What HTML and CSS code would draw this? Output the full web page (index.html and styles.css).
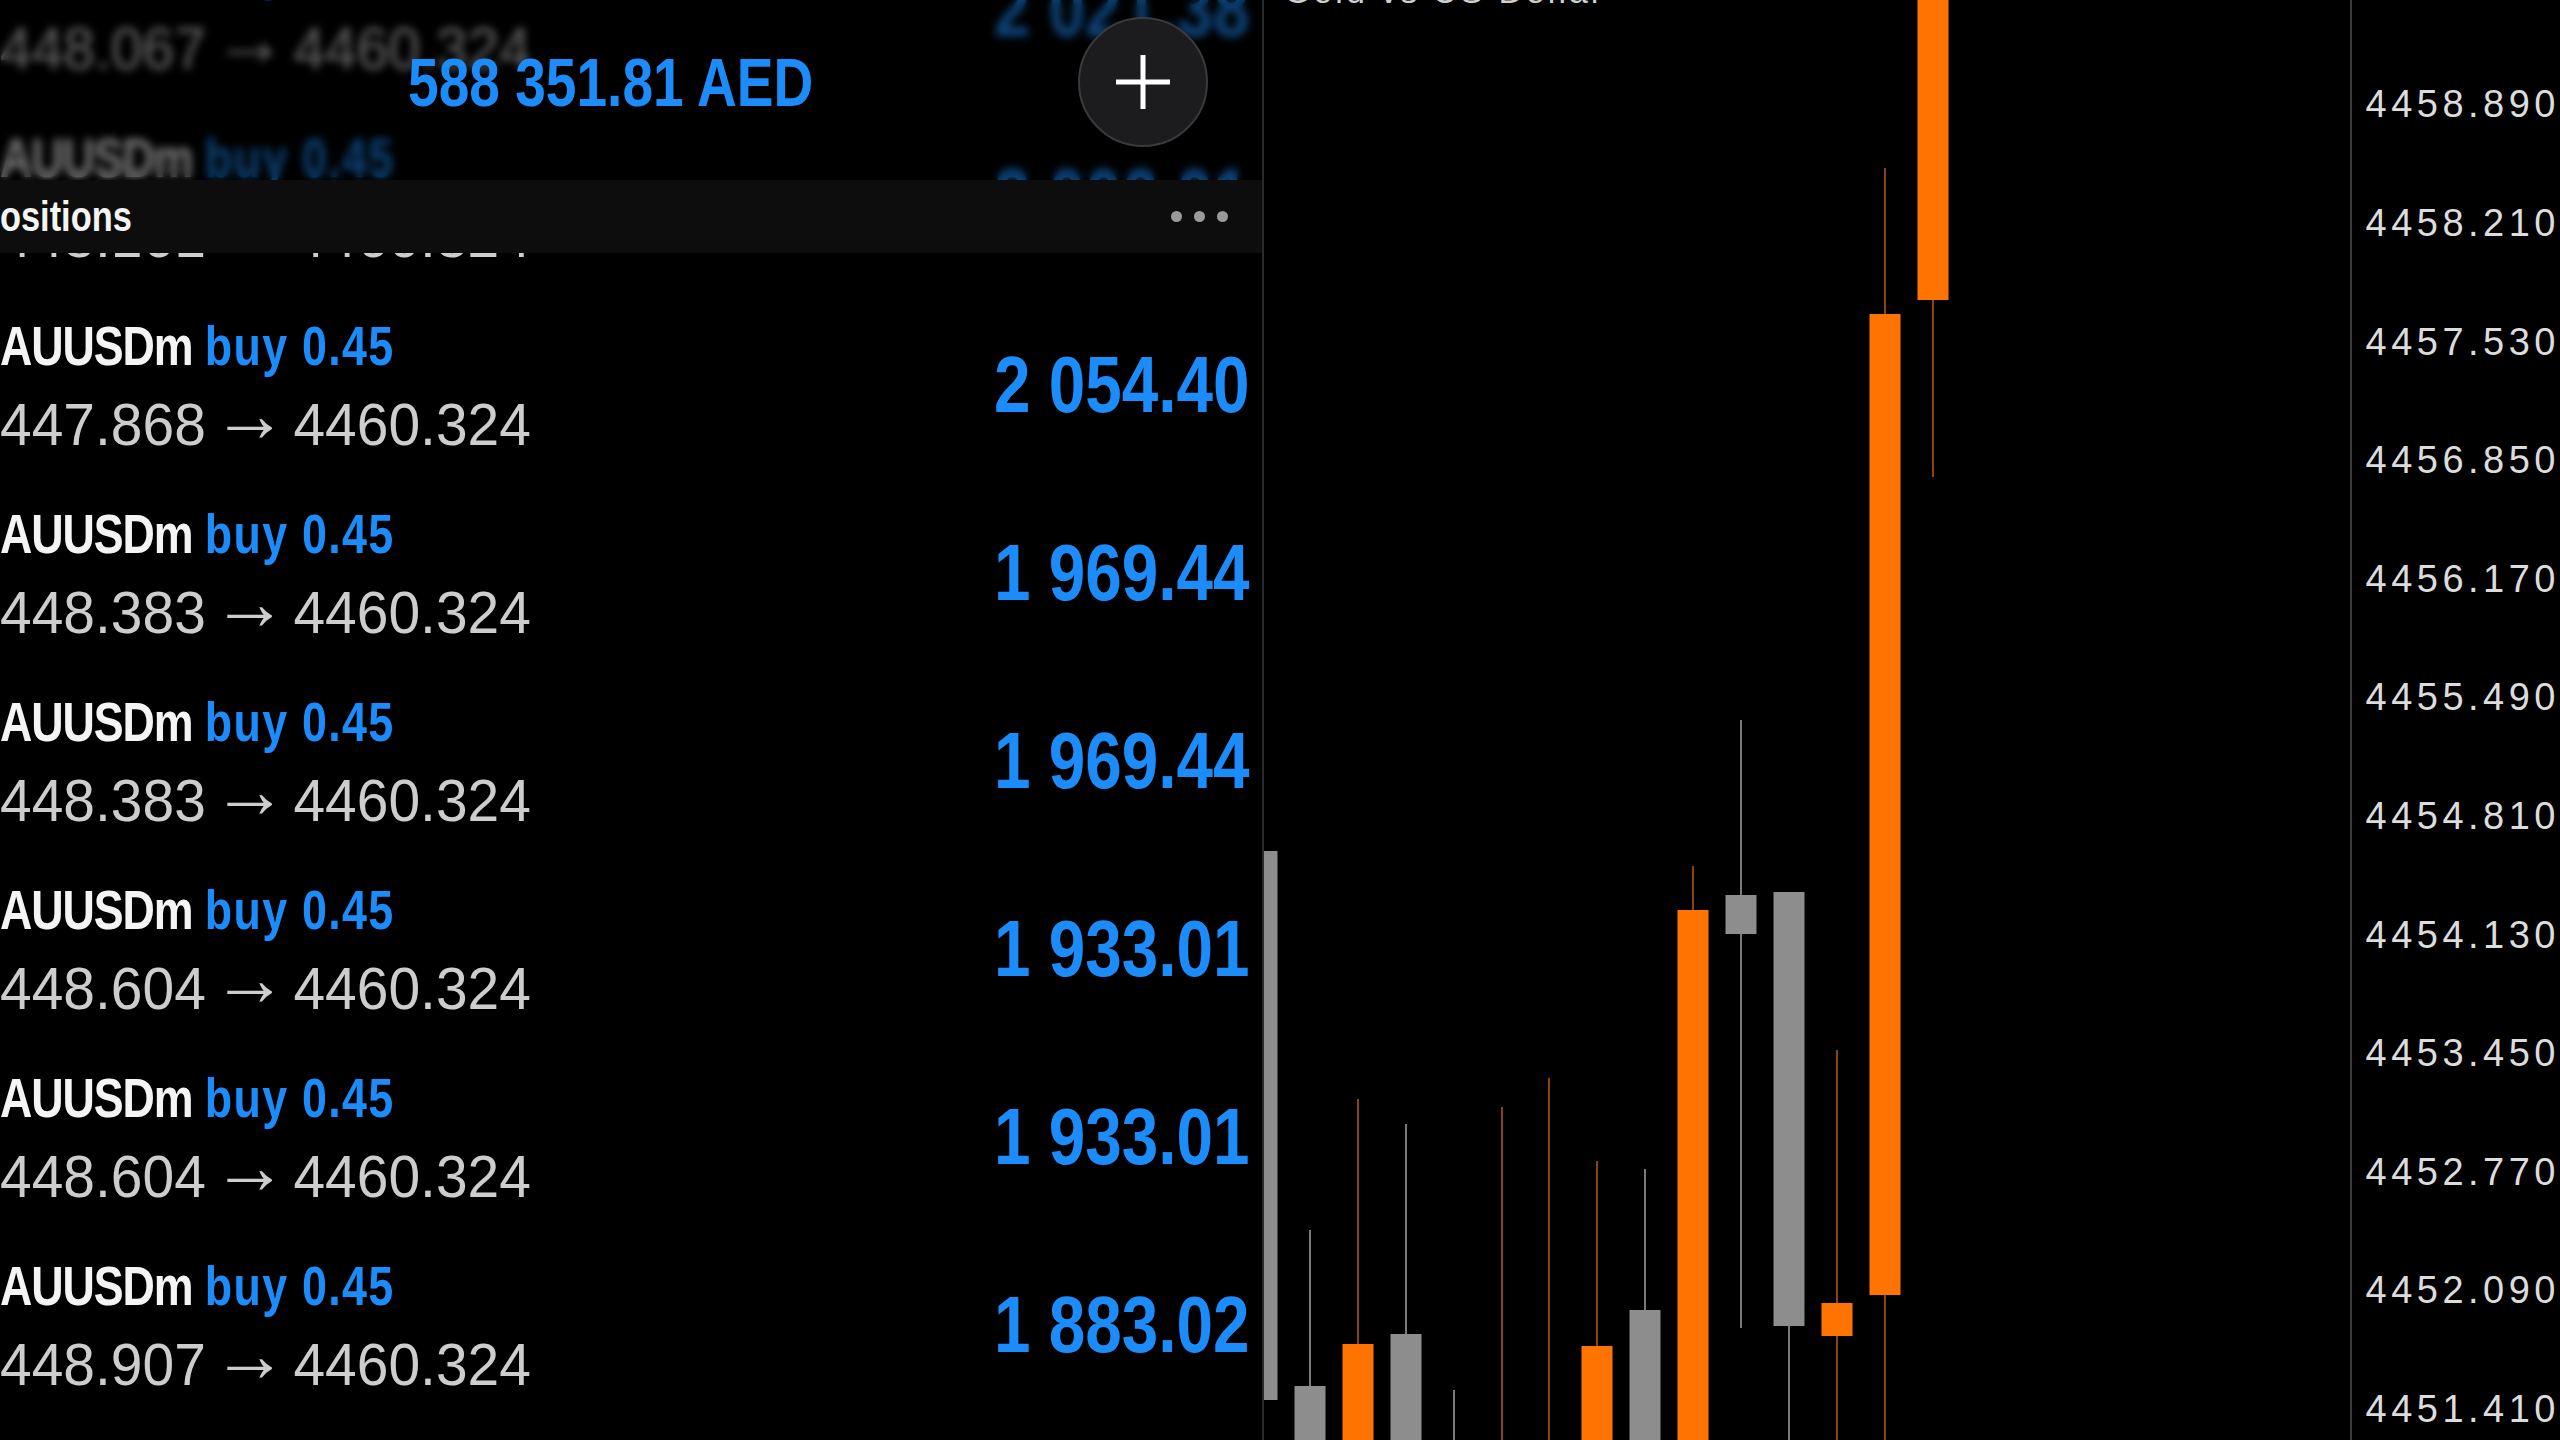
FILE: index.html
```html
<!DOCTYPE html>
<html lang="en">

<head>
    <meta charset="UTF-8">
    <meta name="viewport" content="width=device-width, initial-scale=1.0">
    <title>Positions</title>
    <link rel="stylesheet" href="styles.css">
</head>

<body>
    <div class="screen">
        <!-- Список позиций -->
        <section class="positions-panel">
            <div class="rows">
                <div class="row">
                    <div class="row-info">
                        <div class="symbol"><span class="ticker">AUUSDm</span> <span class="side">buy 0.45</span></div>
                        <div class="prices">448.067 <span class="arrow">→</span> 4460.324</div>
                    </div>
                    <div class="profit">2 021.38</div>
                </div>
                <div class="row">
                    <div class="row-info">
                        <div class="symbol"><span class="ticker">AUUSDm</span> <span class="side">buy 0.45</span></div>
                        <div class="prices">448.161 <span class="arrow">→</span> 4460.324</div>
                    </div>
                    <div class="profit">2 006.01</div>
                </div>
                <div class="row">
                    <div class="row-info">
                        <div class="symbol"><span class="ticker">AUUSDm</span> <span class="side">buy 0.45</span></div>
                        <div class="prices">447.868 <span class="arrow">→</span> 4460.324</div>
                    </div>
                    <div class="profit">2 054.40</div>
                </div>
                <div class="row">
                    <div class="row-info">
                        <div class="symbol"><span class="ticker">AUUSDm</span> <span class="side">buy 0.45</span></div>
                        <div class="prices">448.383 <span class="arrow">→</span> 4460.324</div>
                    </div>
                    <div class="profit">1 969.44</div>
                </div>
                <div class="row">
                    <div class="row-info">
                        <div class="symbol"><span class="ticker">AUUSDm</span> <span class="side">buy 0.45</span></div>
                        <div class="prices">448.383 <span class="arrow">→</span> 4460.324</div>
                    </div>
                    <div class="profit">1 969.44</div>
                </div>
                <div class="row">
                    <div class="row-info">
                        <div class="symbol"><span class="ticker">AUUSDm</span> <span class="side">buy 0.45</span></div>
                        <div class="prices">448.604 <span class="arrow">→</span> 4460.324</div>
                    </div>
                    <div class="profit">1 933.01</div>
                </div>
                <div class="row">
                    <div class="row-info">
                        <div class="symbol"><span class="ticker">AUUSDm</span> <span class="side">buy 0.45</span></div>
                        <div class="prices">448.604 <span class="arrow">→</span> 4460.324</div>
                    </div>
                    <div class="profit">1 933.01</div>
                </div>
                <div class="row">
                    <div class="row-info">
                        <div class="symbol"><span class="ticker">AUUSDm</span> <span class="side">buy 0.45</span></div>
                        <div class="prices">448.907 <span class="arrow">→</span> 4460.324</div>
                    </div>
                    <div class="profit">1 883.02</div>
                </div>
            </div>

            <!-- Шапка поверх списка -->
            <div class="panel-top">
                <div class="account-bar">
                    <div class="balance">588 351.81 AED</div>
                    <button class="add-btn" type="button">
                        <svg width="60" height="60" viewBox="0 0 60 60">
                            <path d="M30 3 V57 M3 30 H57" stroke="#fff" stroke-width="5" />
                        </svg>
                    </button>
                </div>
                <div class="section-bar">
                    <span class="section-title">Positions</span>
                    <span class="more-dots"><i></i><i></i><i></i></span>
                </div>
            </div>
        </section>

        <!-- График -->
        <section class="chart">
            <div class="chart-title">Gold vs US Dollar</div>
            <svg class="candles" width="1086" height="1440" viewBox="1264 0 1086 1440">
                <g stroke-width="2">
                    <line x1="1310" y1="1230" x2="1310" y2="1386" stroke="#7a7a7a" />
                    <line x1="1358" y1="1099" x2="1358" y2="1344" stroke="#8a4312" />
                    <line x1="1406" y1="1124" x2="1406" y2="1334" stroke="#7a7a7a" />
                    <line x1="1454" y1="1390" x2="1454" y2="1440" stroke="#7a7a7a" />
                    <line x1="1502" y1="1107" x2="1502" y2="1440" stroke="#8a4312" />
                    <line x1="1549" y1="1078" x2="1549" y2="1440" stroke="#8a4312" />
                    <line x1="1597" y1="1161" x2="1597" y2="1346" stroke="#8a4312" />
                    <line x1="1645" y1="1169" x2="1645" y2="1310" stroke="#7a7a7a" />
                    <line x1="1693" y1="866" x2="1693" y2="910" stroke="#8a4312" />
                    <line x1="1741" y1="720" x2="1741" y2="1328" stroke="#7a7a7a" />
                    <line x1="1789" y1="1326" x2="1789" y2="1440" stroke="#7a7a7a" />
                    <line x1="1837" y1="1050" x2="1837" y2="1440" stroke="#8a4312" />
                    <line x1="1885" y1="168" x2="1885" y2="1440" stroke="#8a4312" />
                    <line x1="1933" y1="0" x2="1933" y2="477" stroke="#8a4312" />
                </g>
                <g class="bear" fill="#8d8d8d">
                    <rect x="1246.5" y="851" width="31" height="549" />
                    <rect x="1294.5" y="1386" width="31" height="60" />
                    <rect x="1390.5" y="1334" width="31" height="110" />
                    <rect x="1629.5" y="1310" width="31" height="130" />
                    <rect x="1725.5" y="895" width="31" height="39" />
                    <rect x="1773.5" y="892" width="31" height="434" />
                </g>
                <g class="bull" fill="#ff7300">
                    <rect x="1342.5" y="1344" width="31" height="100" />
                    <rect x="1581.5" y="1346" width="31" height="100" />
                    <rect x="1677.5" y="910" width="31" height="530" />
                    <rect x="1821.5" y="1303" width="31" height="33" />
                    <rect x="1869.5" y="314" width="31" height="981" />
                    <rect x="1917.5" y="-10" width="31" height="310" />
                </g>
            </svg>
        </section>

        <!-- Шкала цен -->
        <aside class="price-axis">
            <div class="axis-labels">
                <div class="axis-label"><span class="tick"></span>4459.570</div>
                <div class="axis-label"><span class="tick"></span>4458.890</div>
                <div class="axis-label"><span class="tick"></span>4458.210</div>
                <div class="axis-label"><span class="tick"></span>4457.530</div>
                <div class="axis-label"><span class="tick"></span>4456.850</div>
                <div class="axis-label"><span class="tick"></span>4456.170</div>
                <div class="axis-label"><span class="tick"></span>4455.490</div>
                <div class="axis-label"><span class="tick"></span>4454.810</div>
                <div class="axis-label"><span class="tick"></span>4454.130</div>
                <div class="axis-label"><span class="tick"></span>4453.450</div>
                <div class="axis-label"><span class="tick"></span>4452.770</div>
                <div class="axis-label"><span class="tick"></span>4452.090</div>
                <div class="axis-label"><span class="tick"></span>4451.410</div>
            </div>
        </aside>
    </div>
</body>

</html>
```

FILE: styles.css
```css
body {
    margin: 0;
    background-color: #000;
    font-family: "Liberation Sans", Arial, sans-serif;
    width: 2560px;
    height: 1440px;
    overflow: hidden;
}

.screen {
    display: flex;
    height: 1440px;
}

/* левая панель */
.positions-panel {
    width: 1262px;
    flex: none;
    position: relative;
    overflow: hidden;
    background-color: #000;
}

.rows {
    margin-top: -85px;
}

.row {
    height: 188px;
    display: flex;
    justify-content: space-between;
    align-items: center;
    padding-right: 13px;
    box-sizing: border-box;
}

.row-info {
    align-self: flex-start;
    padding-top: 20px;
    white-space: nowrap;
}

/* узкое начертание: сжатие по горизонтали */
.symbol {
    font-weight: bold;
    font-size: 56px;
    line-height: 70px;
    color: #f4f4f4;
    transform: scaleX(0.8);
    transform-origin: left center;
}

.ticker {
    letter-spacing: -1.4px;
}

.side {
    color: #1c8cfa;
    letter-spacing: 1.6px;
}

.prices {
    font-size: 59px;
    line-height: 88px;
    color: #cdcdcd;
    transform: scaleX(0.965);
    transform-origin: left center;
}

.arrow {
    font-size: 78px;
    line-height: 0;
    vertical-align: 4px;
    margin: 0 -10px;
}

.profit {
    font-weight: bold;
    font-size: 80px;
    line-height: 1;
    color: #1c8cfa;
    white-space: nowrap;
    transform: scaleX(0.82);
    transform-origin: right center;
}

.panel-top {
    position: absolute;
    top: 0;
    left: 0;
    right: 0;
}

.account-bar {
    height: 180px;
    display: flex;
    align-items: center;
    padding: 0 54px 16px 408px;
    box-sizing: border-box;
    background-color: rgba(0, 0, 0, 0.5);
    backdrop-filter: blur(4px);
}

.balance {
    font-weight: bold;
    font-size: 68px;
    line-height: 1;
    color: #1c8cfa;
    white-space: nowrap;
    transform: scaleX(0.81);
    transform-origin: left center;
}

.add-btn {
    margin-left: auto;
    width: 130px;
    height: 130px;
    border-radius: 50%;
    background-color: #1c1c1e;
    border: 2px solid #3a3a3c;
    display: flex;
    justify-content: center;
    align-items: center;
    padding: 0;
}

.section-bar {
    height: 73px;
    background-color: #0d0d0d;
    display: flex;
    align-items: center;
    justify-content: space-between;
    padding-right: 34px;
}

.section-title {
    font-weight: bold;
    font-size: 43px;
    color: #f4f4f4;
    margin-left: -23px;
    transform: scaleX(0.8);
    transform-origin: left center;
}

.more-dots {
    display: flex;
    gap: 12px;
}

.more-dots i {
    width: 11px;
    height: 11px;
    border-radius: 50%;
    background-color: #9a9a9a;
}

/* график */
.chart {
    width: 1088px;
    flex: none;
    position: relative;
    overflow: hidden;
    border-left: 2px solid #2a2a2a;
    box-sizing: border-box;
}

.candles {
    display: block;
}

.chart-title {
    position: absolute;
    top: -28px;
    left: 20px;
    font-size: 34px;
    letter-spacing: 3px;
    color: #d0d0d0;
    white-space: nowrap;
}

/* шкала */
.price-axis {
    flex: 1;
    border-left: 2px solid #3a3a3a;
    overflow: hidden;
}

.axis-labels {
    margin-top: -73px;
}

.axis-label {
    height: 118.6px;
    display: flex;
    align-items: center;
    font-size: 38px;
    letter-spacing: 4.5px;
    color: #dcdcdc;
    white-space: nowrap;
}

.tick {
    width: 14px;
    height: 2px;
    margin-left: -10px;
    margin-right: 20px;
    background-color: #4a4a4a;
}
```
